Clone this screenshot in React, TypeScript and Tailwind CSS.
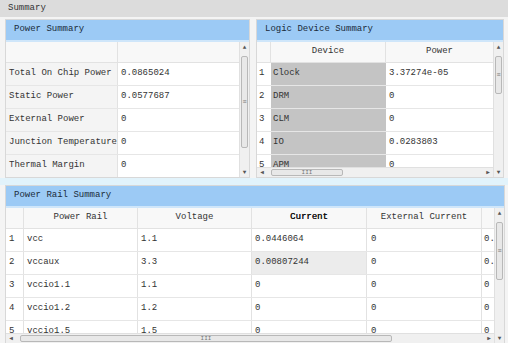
import React from 'react'

const powerRows = [
  ['Total On Chip Power', '0.0865024'],
  ['Static Power', '0.0577687'],
  ['External Power', '0'],
  ['Junction Temperature', '0'],
  ['Thermal Margin', '0'],
]

const deviceRows = [
  ['1', 'Clock', '3.37274e-05'],
  ['2', 'DRM', '0'],
  ['3', 'CLM', '0'],
  ['4', 'IO', '0.0283803'],
  ['5', 'APM', '0'],
]

const railRows = [
  ['1', 'vcc', '1.1', '0.0446064', '0', '0.'],
  ['2', 'vccaux', '3.3', '0.00807244', '0', '0.'],
  ['3', 'vccio1.1', '1.1', '0', '0', '0'],
  ['4', 'vccio1.2', '1.2', '0', '0', '0'],
  ['5', 'vccio1.5', '1.5', '0', '0', '0'],
]

const VScroll = ({ thumbTop, thumbH }: { thumbTop: number; thumbH: number }) => (
  <div className="relative w-[10px] h-full bg-[#f0f0f0] border-l border-[#e0e0e0] shrink-0">
    <div className="h-[10px] flex items-center justify-center text-[6px] text-[#555]">▲</div>
    <div
      className="absolute left-[1px] right-[1px] bg-[#e8e8e8] border border-[#b8b8b8] rounded-[2px] flex items-center justify-center text-[7px] text-[#777]"
      style={{ top: thumbTop, height: thumbH }}
    >
      ≡
    </div>
    <div className="absolute bottom-0 left-0 right-0 h-[10px] flex items-center justify-center text-[6px] text-[#555]">▼</div>
  </div>
)

const HScroll = ({ thumbLeft, thumbW }: { thumbLeft: number; thumbW: number }) => (
  <div className="relative h-[10px] w-full bg-[#f0f0f0] border-t border-[#e0e0e0] shrink-0">
    <div className="absolute left-0 top-0 w-[10px] h-full flex items-center justify-center text-[6px] text-[#555]">◀</div>
    <div
      className="absolute top-[1px] bottom-[1px] bg-[#e8e8e8] border border-[#b8b8b8] rounded-[2px] flex items-center justify-center text-[6px] text-[#777]"
      style={{ left: thumbLeft, width: thumbW }}
    >
      III
    </div>
    <div className="absolute right-0 top-0 w-[10px] h-full flex items-center justify-center text-[6px] text-[#555]">▶</div>
  </div>
)

const PanelHeader = ({ title }: { title: string }) => (
  <div className="h-[22px] bg-[#9ccaf5] border-b-2 border-[#cfe6fa] flex items-center px-[8px] text-[#1a2a3a] shrink-0">
    {title}
  </div>
)

export default function App() {
  return (
    <div
      className="w-[508px] h-[343px] overflow-hidden bg-[#f4f4f4] text-[9px] text-[#333] flex flex-col"
      style={{ fontFamily: '"Liberation Mono", "DejaVu Sans Mono", monospace' }}
    >
      <div className="h-[17px] bg-[#dcdcdc] flex items-center px-[8px] shrink-0">Summary</div>

      <div className="flex gap-[6px] pl-[5px] pr-[4px] pt-[2px] h-[161px] shrink-0">
        {/* Power Summary */}
        <div className="w-[245px] flex flex-col bg-white border border-[#d8d8d8]">
          <PanelHeader title="Power Summary" />
          <div className="flex flex-1 min-h-0">
            <div className="flex-1 overflow-hidden">
              <div className="grid grid-cols-[112px_1fr] h-[21px] bg-[#f8f8f8] border-b border-[#e2e2e2]">
                <div className="border-r border-[#e2e2e2]" />
                <div />
              </div>
              {powerRows.map(([label, value]) => (
                <div key={label} className="grid grid-cols-[112px_1fr] h-[23px] border-b border-[#e6e6e6]">
                  <div className="bg-[#f4f4f4] border-r border-[#e2e2e2] flex items-center pl-[3px] whitespace-nowrap">
                    {label}
                  </div>
                  <div className="flex items-center pl-[3px]">{value}</div>
                </div>
              ))}
            </div>
            <VScroll thumbTop={14} thumbH={92} />
          </div>
        </div>

        {/* Logic Device Summary */}
        <div className="flex-1 flex flex-col bg-white border border-[#d8d8d8]">
          <PanelHeader title="Logic Device Summary" />
          <div className="flex flex-1 min-h-0">
            <div className="flex-1 flex flex-col min-w-0">
              <div className="flex-1 overflow-hidden">
                <div className="grid grid-cols-[14px_115px_1fr] h-[21px] bg-[#f8f8f8] border-b border-[#e2e2e2]">
                  <div className="border-r border-[#e2e2e2]" />
                  <div className="border-r border-[#e2e2e2] flex items-center justify-center">Device</div>
                  <div className="flex items-center justify-center">Power</div>
                </div>
                {deviceRows.map(([n, name, value]) => (
                  <div key={n} className="grid grid-cols-[14px_115px_1fr] h-[23px] border-b border-[#e6e6e6]">
                    <div className="flex items-center pl-[2px]">{n}</div>
                    <div className="bg-[#c4c4c4] flex items-center pl-[2px]">{name}</div>
                    <div className="flex items-center pl-[3px]">{value}</div>
                  </div>
                ))}
              </div>
              <HScroll thumbLeft={14} thumbW={72} />
            </div>
            <VScroll thumbTop={14} thumbH={38} />
          </div>
        </div>
      </div>

      <div className="h-[7px] bg-[#e2f3fb] shrink-0" />

      {/* Power Rail Summary */}
      <div className="flex-1 flex flex-col bg-white ml-[5px] mr-[3px] border border-[#d8d8d8] border-b-0 min-h-0">
        <PanelHeader title="Power Rail Summary" />
        <div className="flex flex-1 min-h-0">
          <div className="flex-1 flex flex-col min-w-0">
            <div className="flex-1 overflow-hidden">
              <div className="grid grid-cols-[18px_114px_114px_115px_115px_1fr] h-[21px] bg-[#f8f8f8] border-b border-[#e2e2e2]">
                <div className="border-r border-[#e2e2e2]" />
                <div className="border-r border-[#e2e2e2] flex items-center justify-center">Power Rail</div>
                <div className="border-r border-[#e2e2e2] flex items-center justify-center">Voltage</div>
                <div className="border-r border-[#e2e2e2] flex items-center justify-center text-[#111] [text-shadow:0.25px_0_0_#111]">
                  Current
                </div>
                <div className="border-r border-[#e2e2e2] flex items-center justify-center">External Current</div>
                <div />
              </div>
              {railRows.map(([n, rail, v, c, e, x]) => (
                <div
                  key={n}
                  className="grid grid-cols-[18px_114px_114px_115px_115px_1fr] h-[23px] border-b border-[#e6e6e6]"
                >
                  <div className="flex items-center pl-[3px] border-r border-[#e2e2e2]">{n}</div>
                  <div className="flex items-center pl-[3px] border-r border-[#e2e2e2]">{rail}</div>
                  <div className="flex items-center pl-[3px] border-r border-[#e2e2e2]">{v}</div>
                  <div
                    className={`flex items-center pl-[3px] border-r border-[#e2e2e2] ${n === '2' ? 'bg-[#ececec]' : ''}`}
                  >
                    {c}
                  </div>
                  <div className="flex items-center pl-[4px] border-r border-[#e2e2e2]">{e}</div>
                  <div className="flex items-center pl-[2px] overflow-hidden">{x}</div>
                </div>
              ))}
            </div>
            <HScroll thumbLeft={14} thumbW={372} />
          </div>
          <VScroll thumbTop={14} thumbH={58} />
        </div>
      </div>
    </div>
  )
}
